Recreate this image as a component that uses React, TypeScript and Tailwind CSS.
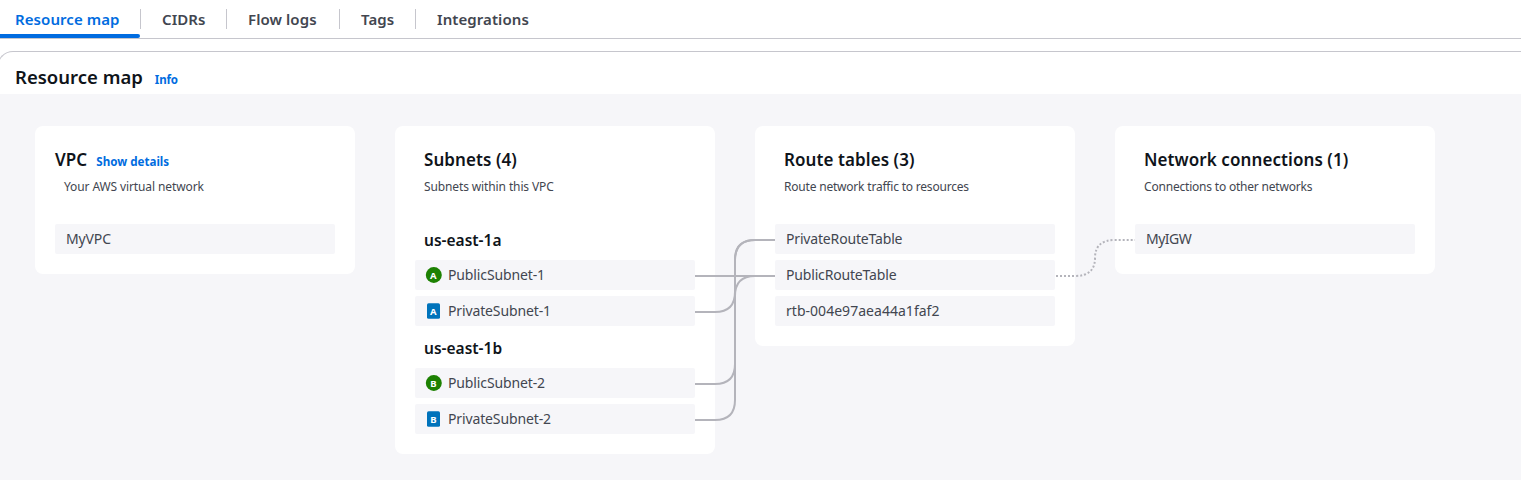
import type { ReactNode } from "react";

type Shape = "circle" | "square";

const tabs = [
  { label: "CIDRs", cls: "w-[86px]" },
  { label: "Flow logs", cls: "w-[113px]" },
  { label: "Tags", cls: "w-[76px]" },
];

function Badge({ shape, letter }: { shape: Shape; letter: string }) {
  return (
    <svg width="18" height="16" viewBox="0 0 18 16" className="-ml-px mr-[5px] shrink-0">
      {shape === "circle" ? (
        <ellipse cx="8.8" cy="8" rx="8" ry="7.9" fill="#1d8102" />
      ) : (
        <rect x="2" y="0.2" width="13" height="15.6" rx="1.6" fill="#0073bb" />
      )}
      <text x="8.4" y="11.6" textAnchor="middle" fill="#fff" fontSize="9.5" fontWeight="700" fontFamily="Noto Sans, sans-serif">
        {letter}
      </text>
    </svg>
  );
}

function Row({ tracking = "tracking-[-0.13px]", badge, children }: { tracking?: string; badge?: ReactNode; children: ReactNode }) {
  return (
    <div className="flex h-[30px] items-center rounded-[2px] bg-[#f6f6f9] px-[11px] text-[14px] text-[#424650]">
      {badge}
      <span className={`pb-px ${tracking}`}>{children}</span>
    </div>
  );
}

type CardProps = { title: string; subtitle: string; tracking: string; action?: string; children: ReactNode };

function Card({ title, subtitle, tracking, action, children }: CardProps) {
  return (
    <section className="w-[320px] shrink-0 rounded-[8px] bg-white px-5 pb-5">
      <div className="h-[98px] pt-[22px]">
        <div className={action ? "flex items-baseline gap-[9px]" : "flex items-baseline pl-[9px]"}>
          <h3 className="text-[17px] leading-6 font-semibold tracking-[0.08px] text-[#0f141a]">{title}</h3>
          {action && <a className="text-[11.6px] font-bold text-[#006ce0]">{action}</a>}
        </div>
        <p className={`pt-[5px] pl-[9px] text-[12px] leading-5 text-[#424650] ${tracking}`}>{subtitle}</p>
      </div>
      <div className="flex flex-col gap-[6px]">{children}</div>
    </section>
  );
}

function Zone({ name }: { name: string }) {
  return <h4 className="flex h-[30px] items-center pt-[3px] pl-[9px] text-[15.5px] font-semibold text-[#0f141a]">{name}</h4>;
}

export default function App() {
  return (
    <div className="flex h-[480px] w-[1521px] flex-col overflow-hidden bg-white font-['Noto_Sans',sans-serif]">
      <nav className="flex h-[39px] shrink-0 border-b border-[#c6c6cd] text-[15px] font-semibold tracking-[0.08px] text-[#424650]">
        <div className="flex w-[140px] flex-col justify-between text-[#006ce0]">
          <span className="pt-[9px] pl-[15px] leading-5">Resource map</span>
          <span className="h-1 rounded-r-[2px] bg-[#006ce0]" />
        </div>
        {tabs.map((t) => (
          <div key={t.label} className={`mt-[9px] h-5 border-l border-[#c6c6cd] pl-[21px] leading-5 ${t.cls}`}>{t.label}</div>
        ))}
        <div className="mt-[9px] h-5 border-l border-[#c6c6cd] pl-[21px] leading-5">Integrations</div>
      </nav>
      <main className="mt-3 -ml-[3px] flex grow flex-col">
        <header className="flex h-[43px] shrink-0 items-baseline rounded-tl-[16px] border-t border-l border-[#c6c6cd] pt-[11px] pl-[17px]">
          <h2 className="text-[18.5px] leading-7 font-semibold text-[#0f141a]">Resource map</h2>
          <a className="ml-3 text-[11.5px] font-bold tracking-[-0.15px] text-[#006ce0]">Info</a>
        </header>
        <div className="relative flex grow items-start gap-10 bg-[#f6f6f9] pt-8 pl-[38px]">
          <Card title="VPC" action="Show details" subtitle="Your AWS virtual network" tracking="tracking-[-0.11px]">
            <Row>MyVPC</Row>
          </Card>
          <Card title="Subnets (4)" subtitle="Subnets within this VPC" tracking="tracking-[-0.12px]">
            <Zone name="us-east-1a" />
            <Row badge={<Badge shape="circle" letter="A" />}>PublicSubnet-1</Row>
            <Row badge={<Badge shape="square" letter="A" />}>PrivateSubnet-1</Row>
            <Zone name="us-east-1b" />
            <Row badge={<Badge shape="circle" letter="B" />}>PublicSubnet-2</Row>
            <Row badge={<Badge shape="square" letter="B" />}>PrivateSubnet-2</Row>
          </Card>
          <Card title="Route tables (3)" subtitle="Route network traffic to resources" tracking="tracking-[-0.2px]">
            <Row tracking="tracking-[-0.17px]">PrivateRouteTable</Row>
            <Row tracking="tracking-[-0.17px]">PublicRouteTable</Row>
            <Row tracking="tracking-[0.03px]">rtb-004e97aea44a1faf2</Row>
          </Card>
          <Card title="Network connections (1)" subtitle="Connections to other networks" tracking="tracking-[-0.2px]">
            <Row tracking="tracking-[-0.5px]">MyIGW</Row>
          </Card>
          <svg className="pointer-events-none absolute top-0 left-[3px]" width="1518" height="386" viewBox="0 94 1518 386" fill="none" stroke="#b4b4bb" strokeWidth="2">
            <path d="M695 276H775" />
            <path d="M695 312H715Q735 312 735 292V260Q735 240 755 240H775" />
            <path d="M695 384H715Q735 384 735 364V296Q735 276 755 276H775" />
            <path d="M695 420H715Q735 420 735 400V260Q735 240 755 240H775" />
            <path d="M1056 276H1075Q1095 276 1095 258Q1095 240 1115 240H1135" strokeDasharray="2 2" />
          </svg>
        </div>
      </main>
    </div>
  );
}
